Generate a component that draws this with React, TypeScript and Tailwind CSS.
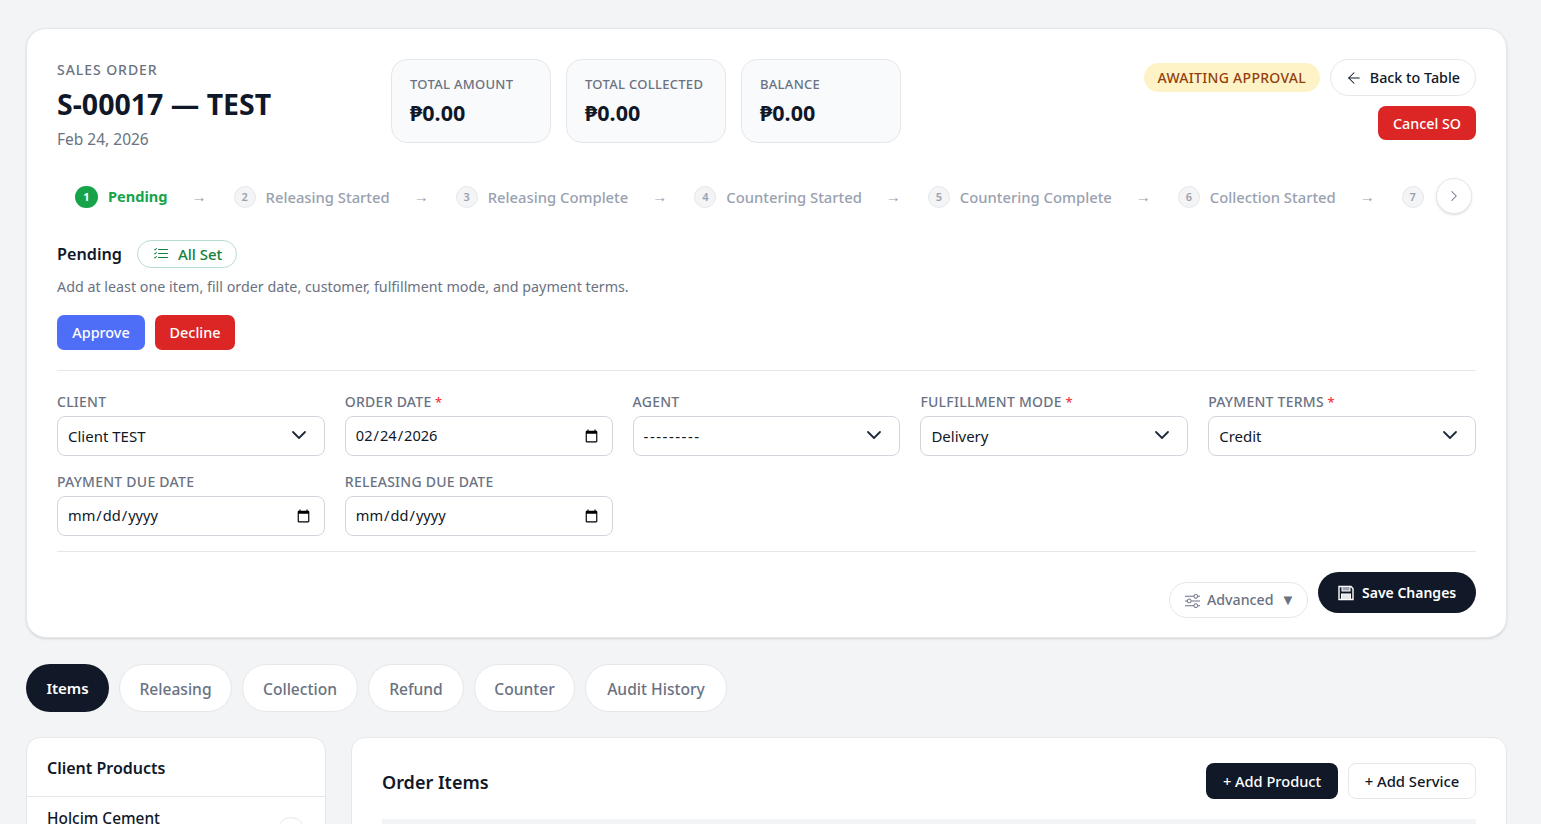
import { ArrowLeft, ChevronDown, ChevronRight } from 'lucide-react';
import { BsListCheck, BsSliders } from 'react-icons/bs';

const steps = [
  'Pending',
  'Releasing Started',
  'Releasing Complete',
  'Countering Started',
  'Countering Complete',
  'Collection Started',
  'Collection Complete',
];

const stats = ['TOTAL AMOUNT', 'TOTAL COLLECTED', 'BALANCE'];
const tabs = [
  { name: 'Releasing', width: 'w-[113px]' },
  { name: 'Collection', width: 'w-[116px]' },
  { name: 'Refund', width: 'w-[96px]' },
  { name: 'Counter', width: 'w-[101px]' },
  { name: 'Audit History', width: 'w-[142px]' },
];

function FieldLabel({ text, required }: { text: string; required?: boolean }) {
  return (
    <label className="block text-[14px] leading-[20px] font-medium tracking-[0.25px] text-gray-500 mb-[4px] whitespace-nowrap">
      {text}
      {required && <span className="text-red-500 text-[13px]"> *</span>}
    </label>
  );
}

function SelectField({ label, value, required }: { label: string; value: string; required?: boolean }) {
  return (
    <div>
      <FieldLabel text={label} required={required} />
      <div className="relative">
        <select
          defaultValue={value}
          className={`w-full h-[40px] appearance-none bg-white border border-gray-300 rounded-[8px] px-[10px] text-[15px] text-gray-900 outline-none ${value.startsWith('-') ? 'tracking-[1.5px]' : ''}`}
        >
          <option>{value}</option>
        </select>
        <ChevronDown className="absolute right-[14px] top-[7px] w-[24px] h-[24px] text-gray-800 pointer-events-none" strokeWidth={1.8} />
      </div>
    </div>
  );
}

function DateField({ label, value, required }: { label: string; value?: string; required?: boolean }) {
  return (
    <div>
      <FieldLabel text={label} required={required} />
      <input
        type="date"
        defaultValue={value}
        className="w-full h-[40px] bg-white border border-gray-300 rounded-[8px] pl-[9px] pr-[11px] text-[14.6px] text-gray-900 outline-none"
      />
    </div>
  );
}

function FloppyIcon() {
  return (
    <svg viewBox="0 0 16 16" className="w-[16px] h-[16px]" fill="none">
      <path d="M1 1.5h12l2 2v11H1z" stroke="white" strokeWidth="1.4" />
      <rect x="4" y="1.5" width="8" height="4.5" fill="#9ca3af" stroke="white" strokeWidth="1" />
      <rect x="3.5" y="9" width="9" height="5.5" fill="#e5e7eb" stroke="white" strokeWidth="1" />
    </svg>
  );
}

export default function App() {
  return (
    <div className="h-screen overflow-hidden bg-[#f3f4f6] pl-[26px] pr-[34px] pt-[28px] font-['Noto_Sans',sans-serif] text-gray-900">
      <div className="bg-white border border-gray-200 rounded-[20px] shadow-sm px-[30px] pt-[30px] pb-[24px] h-[610px]">
        <div className="flex justify-between">
          <div className="flex">
            <div className="w-[334px]">
              <div className="text-[14px] leading-[20px] font-medium tracking-[0.95px] text-gray-500 mt-[1px] whitespace-nowrap">SALES ORDER</div>
              <h1 className="text-[28.5px] leading-[36px] font-bold mt-[6px] whitespace-nowrap">S-00017 — TEST</h1>
              <div className="text-[15.5px] leading-[20px] text-gray-500 mt-[7px]">Feb 24, 2026</div>
            </div>
            <div className="flex gap-[15px]">
              {stats.map((s) => (
                <div key={s} className="w-[160px] h-[84px] bg-[#f9fafb] border border-gray-200 rounded-[16px] px-[18px] pt-[14px]">
                  <div className="text-[13px] leading-[20px] font-medium tracking-[0.3px] text-gray-500 whitespace-nowrap">{s}</div>
                  <div className="text-[21.5px] leading-[28px] font-bold mt-[5px]">₱0.00</div>
                </div>
              ))}
            </div>
          </div>
          <div className="flex flex-col items-end gap-[10px]">
            <div className="flex items-center gap-[10px]">
              <span className="h-[29px] w-[176px] justify-center flex items-center rounded-full bg-[#fef3c7] text-[#92400e] text-[14px] font-medium tracking-[0.3px]">AWAITING APPROVAL</span>
              <button className="h-[37px] pl-[14px] pr-[15px] flex items-center gap-[7px] bg-white border border-gray-200 rounded-full text-[14.3px] font-medium">
                <ArrowLeft className="w-[18px] h-[18px]" strokeWidth={1.4} />
                Back to Table
              </button>
            </div>
            <button className="h-[34px] w-[98px] pt-[1px] bg-[#dc2626] text-white text-[14.3px] font-medium rounded-[8px]">Cancel SO</button>
          </div>
        </div>

        <div className="relative mt-[26px] h-[44px] flex items-center">
          <div className="flex items-center gap-[27px] pl-[18px] mr-[48px] overflow-hidden w-full">
            {steps.map((s, i) => (
              <div key={s} className="flex items-center gap-[27px] shrink-0">
                <div className="flex items-center gap-[10px]">
                  <span className={i === 0
                    ? 'w-[23px] h-[22px] rounded-full bg-[#16a34a] text-white text-[11px] font-bold flex items-center justify-center'
                    : 'w-[22px] h-[22px] rounded-full bg-gray-100 border border-gray-200 text-gray-400 text-[11px] font-semibold flex items-center justify-center'}>
                    {i + 1}
                  </span>
                  <span className={i === 0 ? 'text-[14.6px] font-bold text-[#16a34a]' : 'text-[14.8px] font-medium text-gray-400'}>{s}</span>
                </div>
                {i < steps.length - 1 && <span className="text-[15px] leading-[20px] whitespace-nowrap text-gray-400 -ml-[3px] mb-[2px]">→</span>}
              </div>
            ))}
          </div>
          <button className="absolute right-[4px] top-[3px] w-[36px] h-[36px] rounded-full bg-white border border-gray-200 shadow-sm flex items-center justify-center text-gray-500">
            <ChevronRight className="w-[18px] h-[18px]" strokeWidth={1.4} />
          </button>
        </div>

        <div className="flex items-center gap-[15px] mt-[21px]">
          <div className="text-[16.2px] font-semibold">Pending</div>
          <span className="h-[28px] w-[100px] pl-[15px] flex items-center gap-[9px] rounded-full border border-[#b7dfcb] text-[#15803d] text-[15px] font-medium">
            <BsListCheck className="w-[16px] h-[16px]" />
            All Set
          </span>
        </div>
        <p className="text-[14.3px] leading-[20px] text-gray-500 mt-[9px]">Add at least one item, fill order date, customer, fulfillment mode, and payment terms.</p>
        <div className="flex gap-[10px] mt-[18px]">
          <button className="h-[35px] w-[88px] bg-[#4f6ef7] text-white text-[14.4px] font-medium rounded-[7px]">Approve</button>
          <button className="h-[35px] w-[80px] bg-[#dc2626] text-white text-[14.4px] font-medium rounded-[7px]">Decline</button>
        </div>

        <div className="border-t border-gray-200 mt-[20px] pt-[21px] pb-[15px]">
          <div className="grid grid-cols-5 gap-x-[20px] gap-y-[16px]">
            <SelectField label="CLIENT" value="Client TEST" />
            <DateField label="ORDER DATE" value="2026-02-24" required />
            <SelectField label="AGENT" value="---------" />
            <SelectField label="FULFILLMENT MODE" value="Delivery" required />
            <SelectField label="PAYMENT TERMS" value="Credit" required />
            <DateField label="PAYMENT DUE DATE" />
            <DateField label="RELEASING DUE DATE" />
          </div>
        </div>

        <div className="border-t border-gray-200 pt-[20px] flex justify-end gap-[10px]">
          <button className="mt-[10px] h-[36px] w-[139px] pl-[15px] flex items-center gap-[7px] bg-white border border-gray-200 rounded-full text-[14.2px] font-medium text-gray-500">
            <BsSliders className="w-[15px] h-[15px]" />
            Advanced
            <span className="text-[15px] leading-none pb-[2px]">▼</span>
          </button>
          <button className="h-[41px] w-[158px] pl-[20px] flex items-center gap-[8px] bg-[#111827] text-white rounded-full text-[14px] font-semibold">
            <FloppyIcon />
            Save Changes
          </button>
        </div>
      </div>

      <div className="flex gap-[10px] mt-[26px]">
        <button className="h-[48px] w-[83px] pt-[1px] rounded-full bg-[#111827] text-white text-[15px] font-semibold">Items</button>
        {tabs.map((t) => (
          <button key={t.name} className={`${t.width} h-[48px] pt-[3px] rounded-full bg-white border border-gray-200 text-gray-500 text-[15.6px] font-medium whitespace-nowrap`}>
            {t.name}
          </button>
        ))}
      </div>

      <div className="flex gap-[25px] mt-[25px]">
        <div className="w-[300px] shrink-0 bg-white border border-gray-200 rounded-[14px] h-[200px]">
          <div className="px-[20px] pt-[1px] h-[59px] flex items-center border-b border-gray-200 text-[16px] font-semibold">Client Products</div>
          <div className="px-[20px] pt-[10px] flex justify-between">
            <span className="text-[15.4px] font-medium">Holcim Cement</span>
            <span className="w-[28px] h-[28px] rounded-full border border-gray-200 mt-[10px]"></span>
          </div>
        </div>
        <div className="flex-1 bg-white border border-gray-200 rounded-[14px] h-[200px] px-[30px] pt-[25px]">
          <div className="flex items-center justify-between">
            <h2 className="text-[18px] font-semibold pt-[2px]">Order Items</h2>
            <div className="flex gap-[10px]">
              <button className="h-[36px] w-[132px] pt-[1px] bg-[#111827] text-white rounded-[8px] text-[14.6px] font-medium">+ Add Product</button>
              <button className="h-[36px] w-[128px] pt-[1px] bg-white border border-gray-200 rounded-[8px] text-[14.8px] font-medium">+ Add Service</button>
            </div>
          </div>
          <div className="h-[40px] bg-gray-100 mt-[20px]"></div>
        </div>
      </div>
    </div>
  );
}
